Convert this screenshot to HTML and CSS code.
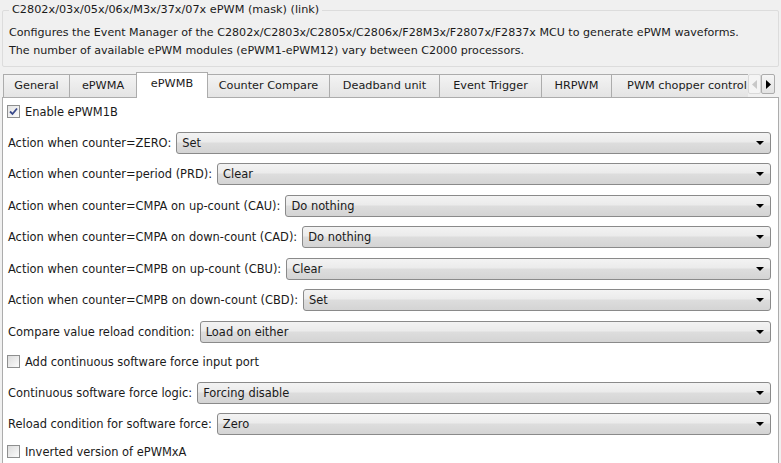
FILE: index.html
```html
<!DOCTYPE html>
<html>
<head>
<meta charset="utf-8">
<link rel="stylesheet" href="styles.css">
</head>
<body>
<fieldset class="group">
  <legend class="legend">C2802x/03x/05x/06x/M3x/37x/07x ePWM (mask) (link)</legend>
  <p class="desc">Configures the Event Manager of the C2802x/C2803x/C2805x/C2806x/F28M3x/F2807x/F2837x MCU to generate ePWM waveforms.<br>The number of available ePWM modules (ePWM1-ePWM12) vary between C2000 processors.</p>
</fieldset>

<div class="tabbar">
  <div class="tabs">
    <div class="tab t-general">General</div>
    <div class="tab t-a">ePWMA</div>
    <div class="tab t-b active">ePWMB</div>
    <div class="tab t-cc">Counter Compare</div>
    <div class="tab t-db">Deadband unit</div>
    <div class="tab t-et">Event Trigger</div>
    <div class="tab t-hr">HRPWM</div>
    <div class="tab t-pc">PWM chopper control</div>
  </div>
  <div class="scroller">
    <div class="sbtn disabled"><svg width="5" height="9" viewBox="0 0 5 9"><path d="M5 0 L0 4.5 L5 9 Z" fill="#c8c8c8"/></svg></div>
    <div class="sbtn"><svg width="5" height="9" viewBox="0 0 5 9"><path d="M0 0 L5 4.5 L0 9 Z" fill="#000"/></svg></div>
  </div>
</div>

<div class="panel">
  <label class="check-row first"><span class="cb checked"><svg width="9" height="9" viewBox="0 0 9 9"><path d="M1 4.5 L3.5 7 L8 1.5" stroke="#3a4a8c" stroke-width="1.8" fill="none"/></svg></span>Enable ePWM1B</label>

  <div class="row"><span class="lbl">Action when counter=ZERO:</span><div class="select"><span>Set</span><i class="arrow"></i></div></div>
  <div class="row"><span class="lbl">Action when counter=period (PRD):</span><div class="select"><span>Clear</span><i class="arrow"></i></div></div>
  <div class="row"><span class="lbl">Action when counter=CMPA on up-count (CAU):</span><div class="select"><span>Do nothing</span><i class="arrow"></i></div></div>
  <div class="row"><span class="lbl">Action when counter=CMPA on down-count (CAD):</span><div class="select"><span>Do nothing</span><i class="arrow"></i></div></div>
  <div class="row"><span class="lbl">Action when counter=CMPB on up-count (CBU):</span><div class="select"><span>Clear</span><i class="arrow"></i></div></div>
  <div class="row"><span class="lbl">Action when counter=CMPB on down-count (CBD):</span><div class="select"><span>Set</span><i class="arrow"></i></div></div>
  <div class="row before-check"><span class="lbl">Compare value reload condition:</span><div class="select"><span>Load on either</span><i class="arrow"></i></div></div>

  <label class="check-row"><span class="cb"></span>Add continuous software force input port</label>

  <div class="row tight"><span class="lbl">Continuous software force logic:</span><div class="select"><span>Forcing disable</span><i class="arrow"></i></div></div>
  <div class="row tight"><span class="lbl">Reload condition for software force:</span><div class="select"><span>Zero</span><i class="arrow"></i></div></div>

  <label class="check-row last"><span class="cb"></span>Inverted version of ePWMxA</label>
</div>
</body>
</html>
```

FILE: styles.css
```css
html, body {
  margin: 0;
  padding: 0;
  height: 100%;
  overflow: hidden;
}
body {
  background: #f0f0f0;
  font-family: "DejaVu Sans", sans-serif;
  font-size: 11.25px;
  color: #1a1a1a;
}
.group {
  margin: 3px 2px 0 2px;
  padding: 0 6px 6px 6px;
  border: 1px solid #dcdcdc;
  border-radius: 2px;
}
.legend {
  padding: 0 3px;
  margin-left: 0;
  line-height: 14px;
}
.desc {
  margin: 7px 0 0 0;
  line-height: 18px;
  white-space: nowrap;
  font-size: 11.1px;
}
.tabbar {
  display: flex;
  margin-top: 5px;
  height: 25px;
  padding-left: 3px;
  position: relative;
  z-index: 2;
}
.tabs {
  display: flex;
  align-items: flex-end;
  overflow: hidden;
  width: 745px;
  height: 26px;
  margin-bottom: -1px;
  flex: none;
}
.tab {
  flex: none;
  height: 22px;
  line-height: 22px;
  border: 1px solid #acacac;
  border-bottom: none;
  margin-right: -1px;
  margin-bottom: 1px;
  background: linear-gradient(#f3f3f3, #e4e4e4);
  text-align: center;
  white-space: nowrap;
}
.tab.active {
  height: 25px;
  line-height: 22px;
  background: #fff;
  position: relative;
  z-index: 2;
  margin-bottom: 0;
}
.t-general { width: 65px; }
.t-a { width: 66px; }
.t-b { width: 70px; }
.t-cc { width: 121px; }
.t-db { width: 109px; }
.t-et { width: 101px; }
.t-hr { width: 69px; }
.t-pc { width: 150px; }
.scroller {
  display: flex;
  margin-top: 2px;
  align-self: flex-start;
}
.sbtn {
  width: 14px;
  height: 20px;
  border: 1px solid #acacac;
  border-radius: 2px;
  background: linear-gradient(#f6f6f6, #e2e2e2);
  display: flex;
  align-items: center;
  justify-content: center;
  box-sizing: border-box;
}
.sbtn.disabled {
  border-color: #d9d9d9;
  background: #f4f4f4;
  width: 13px;
}
.panel {
  margin: 0 2px;
  background: #fff;
  border: 1px solid #acacac;
  height: 400px;
  padding: 2px 4px 0 4px;
  font-size: 11.45px;
}
.check-row {
  display: flex;
  align-items: center;
  gap: 5px;
  height: 23px;
  margin-bottom: 8px;
}
.check-row.first {
  margin-bottom: 8px;
}
.check-row.last {
  margin-top: -3px;
}
.cb {
  width: 11px;
  height: 11px;
  border: 1px solid #8e8f8f;
  background: linear-gradient(135deg, #dcdcdc, #fbfbfb);
  display: flex;
  align-items: center;
  justify-content: center;
  flex: none;
}
.cb.checked {
  background: linear-gradient(135deg, #e4e4e4, #fbfbfb);
}
.row {
  display: flex;
  align-items: center;
  gap: 5px;
  height: 23px;
  margin-bottom: 8.5px;
  padding-left: 1px;
}
.row.before-check {
  margin-bottom: 7px;
}
.row.tight {
  margin-bottom: 8px;
}
.lbl {
  flex: none;
  white-space: nowrap;
}
.select {
  flex: 1;
  height: 20px;
  margin-right: 3px;
  border: 1px solid #8a8a8a;
  border-radius: 3px;
  background: linear-gradient(#f3f3f3 0%, #ebebeb 45%, #dddddd 50%, #d4d4d4 100%);
  display: flex;
  align-items: center;
  justify-content: space-between;
  padding: 0 6px 0 5px;
}
.arrow {
  width: 0;
  height: 0;
  border-left: 4px solid transparent;
  border-right: 4px solid transparent;
  border-top: 4px solid #000;
}
```
